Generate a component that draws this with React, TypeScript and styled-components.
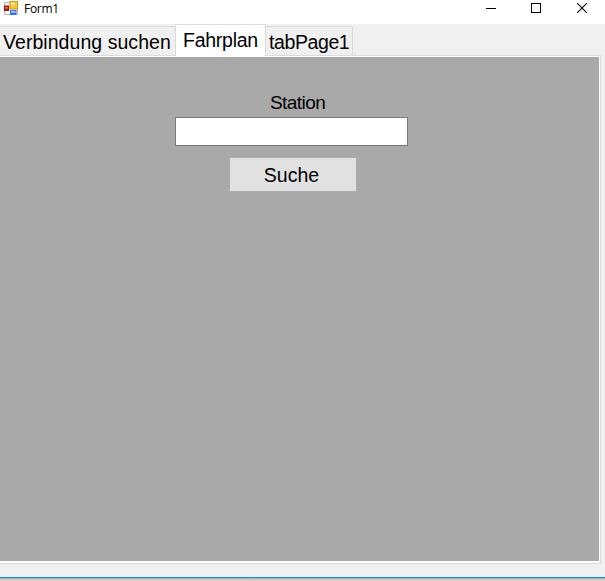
import React from 'react';
import styled, { createGlobalStyle } from 'styled-components';

const Global = createGlobalStyle`
  *, *::before, *::after { box-sizing: border-box; }
  body { margin: 0; background: #fff; overflow: hidden; }
`;

const Window = styled.div`
  width: 605px;
  height: 581px;
  display: flex;
  flex-direction: column;
  background: #f0f0f0;
  color: #000;
  font-family: "Liberation Sans", Arial, sans-serif;
`;

const TitleBar = styled.header`
  height: 24px;
  flex: none;
  display: flex;
  align-items: flex-start;
  background: #fff;
  padding-left: 4px;
`;

const AppIcon = styled.svg`
  width: 14px;
  height: 14px;
  margin-top: 1px;
`;

const Title = styled.span`
  flex: 1;
  margin-left: 6px;
  font: 12px/18px "Open Sans", sans-serif;
  letter-spacing: -0.3px;
`;

const Controls = styled.div`
  display: flex;
`;

const Control = styled.button`
  width: 46px;
  height: 17px;
  display: grid;
  place-items: end center;
  padding: 0 0 4px;
  border: 0;
  background: none;

  &:first-child {
    padding-left: 2px;
  }
`;

const Tabs = styled.nav`
  height: 31px;
  flex: none;
  display: flex;
  align-items: flex-end;
`;

const Tab = styled.button<{ $active?: boolean; $width: number }>`
  width: ${p => p.$width}px;
  height: ${p => (p.$active ? 32 : 29)}px;
  margin-bottom: ${p => (p.$active ? -1 : 0)}px;
  padding: ${p => (p.$active ? '0 0 1px 7px' : '1px 0 0 3px')};
  border: solid #d9d9d9;
  border-width: ${p => (p.$active ? '1px 1px 0' : '1px 1px 0 0')};
  background: ${p => (p.$active ? '#fff' : '#f0f0f0')};
  color: #000;
  font: 19px/28px "Liberation Sans", Arial, sans-serif;
  text-align: left;
  white-space: nowrap;
  z-index: ${p => (p.$active ? 1 : 0)};

  &:first-child {
    border-right: 0;
  }
`;

const TabText = styled.span<{ $size: number; $spacing: number }>`
  font-size: ${p => p.$size}px;
  letter-spacing: ${p => p.$spacing}px;
`;

const Page = styled.main`
  width: 601px;
  height: 509px;
  flex: none;
  padding: 1px 1px 2px 0;
  border: solid #dcdcdc;
  border-width: 1px 1px 1px 0;
  background: #fff;
`;

const Form = styled.form`
  height: 100%;
  display: flex;
  flex-direction: column;
  align-items: flex-start;
  padding: 34px 0 0 175px;
  background: #a9a9a9;
`;

const Label = styled.label`
  margin-left: 95px;
  font-size: 19px;
  line-height: 24px;
  letter-spacing: -0.55px;
`;

const Input = styled.input`
  width: 233px;
  height: 29px;
  margin-top: 2px;
  padding: 0 4px;
  border: 1px solid #7a7a7a;
  border-radius: 0;
  background: #fff;
  font-size: 18px;
`;

const Search = styled.button`
  width: 128px;
  height: 35px;
  margin: 11px 0 0 54px;
  padding: 0 3px 0 0;
  border: 1px solid #adadad;
  background: #e1e1e1;
  color: #000;
  font: 19.5px/24px "Liberation Sans", Arial, sans-serif;
`;

const BottomEdge = styled.footer`
  margin-top: auto;
  height: 4px;
  border-top: 1px solid #1883d7;
  background: linear-gradient(#b5b5b5, #d8d8d8);
`;

export default function App() {
  return (
    <>
      <Global />
      <Window>
        <TitleBar>
          <AppIcon viewBox="0 0 14 14">
            <path d="M.5 1.5h13v12H.5z" fill="#f4f4f4" stroke="#b9b9b9" />
            <path d="M5.5 0H14v8.5H5.5z" fill="#c58a12" />
            <path d="M6.3.8h6.9v6.9H6.3z" fill="#f5c63c" />
            <path d="M7 1.5h4v2.5H7z" fill="#ffe694" />
            <path d="M0 4.5h5V10H0z" fill="#a3180c" />
            <path d="M1.5 5.8h2v2h-2z" fill="#ef806a" />
            <path d="M6 9h6.5v5H6z" fill="#3474d4" />
            <path d="M7 9.8h4.5V12H7z" fill="#8abffa" />
          </AppIcon>
          <Title>Form1</Title>
          <Controls>
            <Control aria-label="Minimize">
              <svg width="10" height="10" shapeRendering="crispEdges"><path d="M0 5h10v1H0z" /></svg>
            </Control>
            <Control aria-label="Maximize">
              <svg width="10" height="10" shapeRendering="crispEdges"><path d="M.5.5h9v9h-9z" fill="none" stroke="#000" /></svg>
            </Control>
            <Control aria-label="Close">
              <svg width="10" height="10"><path d="M0 0l10 10M10 0L0 10" stroke="#000" strokeWidth="1.1" /></svg>
            </Control>
          </Controls>
        </TitleBar>
        <Tabs>
          <Tab $width={175}><TabText $size={19.5} $spacing={0.05}>Verbindung suchen</TabText></Tab>
          <Tab $width={91} $active><TabText $size={19.5} $spacing={-0.25}>Fahrplan</TabText></Tab>
          <Tab $width={87}><TabText $size={19.5} $spacing={-0.4}>tabPage1</TabText></Tab>
        </Tabs>
        <Page>
          <Form onSubmit={e => e.preventDefault()}>
            <Label htmlFor="station">Station</Label>
            <Input id="station" />
            <Search>Suche</Search>
          </Form>
        </Page>
        <BottomEdge />
      </Window>
    </>
  );
}
